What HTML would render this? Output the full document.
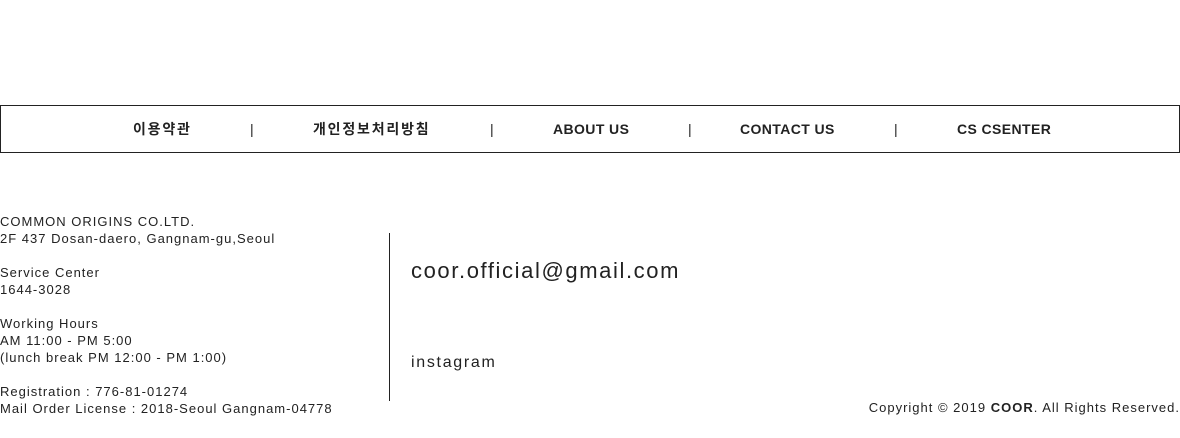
<!DOCTYPE html>
<html><head><meta charset="utf-8"><style>
body{margin:0;width:1180px;height:438px;background:#fff;position:relative;font-family:"Liberation Sans","Noto Sans CJK KR",sans-serif;color:#222;overflow:hidden}
.nav{position:absolute;left:0;top:105px;width:1178px;height:46px;border:1px solid #222}
.nav span{position:absolute;top:15px;font-size:14px;font-weight:bold;line-height:16px;white-space:nowrap;letter-spacing:0.4px}
.nav span.k{letter-spacing:1.8px}
.info{position:absolute;left:0;top:213px;font-size:13px;line-height:17px;letter-spacing:1px;color:#222}
.vl{position:absolute;left:389px;top:233px;width:1px;height:168px;background:#222}
.t{position:absolute;white-space:nowrap}
</style></head><body>
<div class="nav">
<span class="k" style="left:132px">이용약관</span>
<span style="left:249px;font-weight:normal">|</span>
<span class="k" style="left:312px">개인정보처리방침</span>
<span style="left:489px;font-weight:normal">|</span>
<span style="left:552px">ABOUT US</span>
<span style="left:687px;font-weight:normal">|</span>
<span style="left:739px">CONTACT US</span>
<span style="left:893px;font-weight:normal">|</span>
<span style="left:956px">CS CSENTER</span>
</div>
<div class="info">COMMON ORIGINS CO.LTD.<br>2F 437 Dosan-daero, Gangnam-gu,Seoul<br><br>Service Center<br>1644-3028<br><br>Working Hours<br>AM 11:00 - PM 5:00<br>(lunch break PM 12:00 - PM 1:00)<br><br>Registration : 776-81-01274<br>Mail Order License : 2018-Seoul Gangnam-04778</div>
<div class="vl"></div>
<div class="t" style="left:411px;top:258px;font-size:22px;line-height:26px;letter-spacing:1.6px">coor.official@gmail.com</div>
<div class="t" style="left:411px;top:353px;font-size:16px;line-height:20px;letter-spacing:1.7px">instagram</div>
<div class="t" style="right:0;top:400px;font-size:13px;line-height:16px;letter-spacing:1px">Copyright © 2019 <b>COOR</b>. All Rights Reserved.</div>
</body></html>
